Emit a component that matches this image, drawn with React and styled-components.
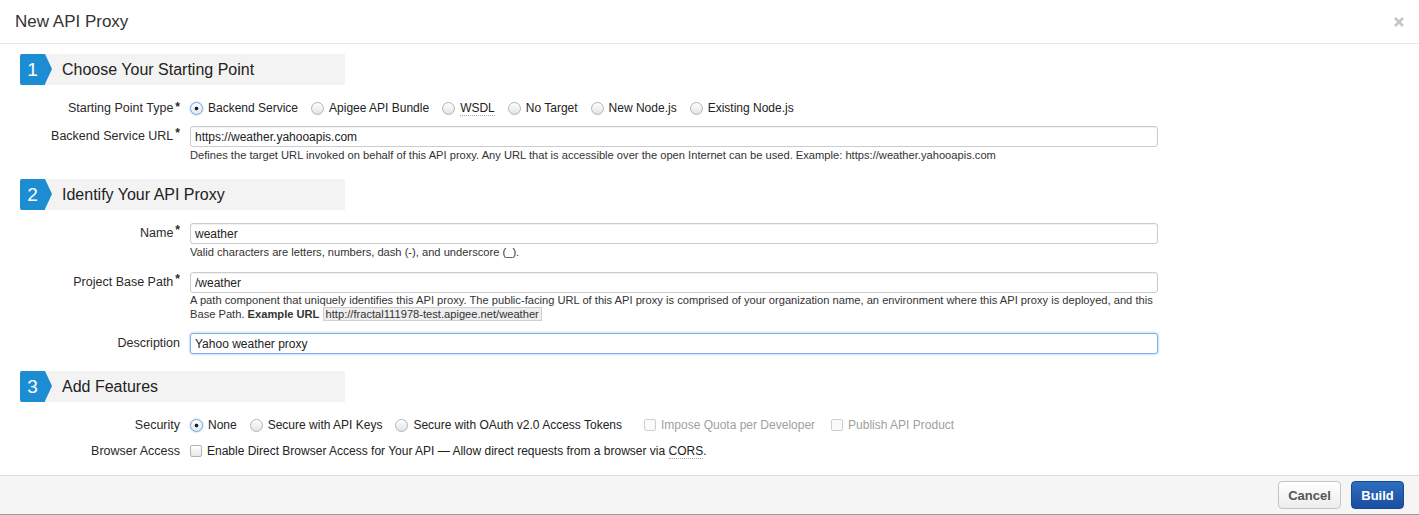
import React from "react";
import styled, { createGlobalStyle } from "styled-components";

const GlobalStyle = createGlobalStyle`
	html, body {
		margin: 0;
		padding: 0;
		background: #fff;
		font-family: "Liberation Sans", Arial, sans-serif;
		color: #333;
	}
`;

const Modal = styled.div`
	display: flex;
	flex-direction: column;
	min-height: 100vh;
	box-sizing: border-box;
`;

const Header = styled.div`
	display: flex;
	align-items: center;
	justify-content: space-between;
	height: 43px;
	padding: 0 15px;
	border-bottom: 1px solid #e8e8e8;
`;

const Title = styled.h2`
	margin: 0;
	font-size: 17px;
	font-weight: normal;
	color: #333;
	padding-top: 1px;
`;

const Close = styled.button`
	display: flex;
	border: 0;
	background: none;
	padding: 0;
	cursor: pointer;
`;

const Body = styled.div`
	flex: 1;
	padding: 0 20px;
`;

const SectionHead = styled.div`
	display: flex;
	align-items: center;
	width: 325px;
	height: 31px;
	margin-top: ${(p) => p.$mt}px;
	background: #f3f3f3;
`;

const Badge = styled.div`
	position: relative;
	display: flex;
	align-items: center;
	justify-content: center;
	width: 25px;
	height: 100%;
	background: #1c8dd3;
	border-radius: 2px 0 0 2px;
	color: #fff;
	font-size: 19px;
	&:after {
		position: absolute;
		right: -7px;
		top: 0;
		content: "";
		border-top: 15.5px solid transparent;
		border-bottom: 15.5px solid transparent;
		border-left: 7px solid #1c8dd3;
	}
`;

const HeadText = styled.h3`
	margin: 0 0 0 17px;
	font-size: 16px;
	font-weight: normal;
	color: #222;
`;

const Row = styled.div`
	display: grid;
	grid-template-columns: 160px 968px;
	column-gap: 10px;
	align-items: start;
	margin-top: ${(p) => p.$mt}px;
`;

const Label = styled.label`
	text-align: right;
	font-size: 12.5px;
	line-height: ${(p) => p.$lh || 21}px;
	color: #2a2a2a;
	white-space: nowrap;
`;

const Req = styled.span`
	display: inline-block;
	margin-left: 2px;
	font-weight: bold;
	font-size: 12px;
	vertical-align: top;
	line-height: 14px;
`;

const Input = styled.input`
	display: block;
	box-sizing: border-box;
	width: 100%;
	height: 21px;
	margin: 0;
	padding: 0 4px;
	font-family: "Liberation Sans", Arial, sans-serif;
	font-size: 12px;
	color: #222;
	border: 1px solid ${(p) => (p.$focused ? "#7fb0e3" : "#cccccc")};
	border-radius: 3px;
	box-shadow: ${(p) =>
		p.$focused ? "0 0 3px rgba(82, 154, 230, 0.6)" : "inset 0 1px 1px rgba(0,0,0,0.06)"};
	outline: none;
`;

const Help = styled.p`
	margin: ${(p) => p.$mt || 0}px 0 0;
	font-size: 11.15px;
	line-height: 14px;
	color: #333;
`;

const Code = styled.span`
	padding: 0 2px;
	background: #eeeeee;
	border: 1px solid #d0d0d0;
`;

const Options = styled.div`
	display: flex;
	align-items: center;
	height: 16px;
	gap: 13px;
	font-size: 12px;
`;

const Option = styled.label`
	display: flex;
	align-items: center;
	gap: 5px;
	margin-left: ${(p) => p.$ml || 0}px;
	color: ${(p) => (p.$disabled ? "#a0a0a0" : "#222")};
	white-space: nowrap;
`;

const Radio = styled.span`
	box-sizing: border-box;
	width: 13px;
	height: 13px;
	border-radius: 50%;
	border: 1px solid ${(p) => (p.$checked ? "#7ea6d6" : "#b3b3b3")};
	background: ${(p) =>
		p.$checked
			? "radial-gradient(circle, #222 0, #222 1.6px, transparent 2.2px), linear-gradient(#fdfdfd, #e2e9f3)"
			: "linear-gradient(#ffffff, #e3e3e3)"};
	box-shadow: ${(p) => (p.$checked ? "0 0 2px rgba(60,140,220,0.6)" : "none")};
`;

const Check = styled.span`
	box-sizing: border-box;
	width: 12px;
	height: 12px;
	border-radius: 2px;
	border: 1px solid ${(p) => (p.$disabled ? "#cfcfcf" : "#b3b3b3")};
	background: ${(p) =>
		p.$disabled ? "#fafafa" : "linear-gradient(#ffffff, #e8e8e8)"};
`;

const Abbr = styled.span`
	border-bottom: 1px dotted #aaa;
`;

const Footer = styled.div`
	display: flex;
	justify-content: flex-end;
	gap: 10px;
	padding: 5px 15px;
	background: #f5f5f5;
	border-top: 1px solid #dddddd;
	border-bottom: 1px solid #9a9a9a;
`;

const Button = styled.button`
	height: 28px;
	padding: 0 9px;
	font-family: "Liberation Sans", Arial, sans-serif;
	font-size: 13px;
	font-weight: bold;
	border-radius: 4px;
	cursor: pointer;
	color: ${(p) => (p.$primary ? "#fff" : "#555")};
	border: 1px solid ${(p) => (p.$primary ? "#1b4a94" : "#c5c5c5")};
	background: ${(p) =>
		p.$primary
			? "linear-gradient(#2d6fc1, #1a4d9e)"
			: "linear-gradient(#ffffff, #ececec)"};
	min-width: ${(p) => (p.$primary ? 53 : 63)}px;
`;

const CloseIcon = () => (
	<svg width="10" height="10" viewBox="0 0 10 10">
		<path d="M1 1 L9 9 M9 1 L1 9" stroke="#c6c6c6" strokeWidth="2.6" />
	</svg>
);

const Section = ({ num, title, mt }) => (
	<SectionHead $mt={mt}>
		<Badge>{num}</Badge>
		<HeadText>{title}</HeadText>
	</SectionHead>
);

const App = () => {
	return (
		<Modal>
			<GlobalStyle />
			<Header>
				<Title>New API Proxy</Title>
				<Close>
					<CloseIcon />
				</Close>
			</Header>
			<Body>
				<Section num="1" title="Choose Your Starting Point" mt={10} />
				<Row $mt={15}>
					<Label $lh={16}>
						Starting Point Type<Req>*</Req>
					</Label>
					<Options>
						<Option>
							<Radio $checked />
							Backend Service
						</Option>
						<Option>
							<Radio />
							Apigee API Bundle
						</Option>
						<Option>
							<Radio />
							<Abbr>WSDL</Abbr>
						</Option>
						<Option>
							<Radio />
							No Target
						</Option>
						<Option>
							<Radio />
							New Node.js
						</Option>
						<Option>
							<Radio />
							Existing Node.js
						</Option>
					</Options>
				</Row>
				<Row $mt={10}>
					<Label>
						Backend Service URL<Req>*</Req>
					</Label>
					<div>
						<Input defaultValue="https://weather.yahooapis.com" />
						<Help $mt={1}>
							Defines the target URL invoked on behalf of this API proxy. Any URL that is
							accessible over the open Internet can be used. Example:
							https://weather.yahooapis.com
						</Help>
					</div>
				</Row>

				<Section num="2" title="Identify Your API Proxy" mt={17} />
				<Row $mt={13}>
					<Label>
						Name<Req>*</Req>
					</Label>
					<div>
						<Input defaultValue="weather" />
						<Help $mt={1}>
							Valid characters are letters, numbers, dash (-), and underscore (_).
						</Help>
					</div>
				</Row>
				<Row $mt={13}>
					<Label>
						Project Base Path<Req>*</Req>
					</Label>
					<div>
						<Input defaultValue="/weather" />
						<Help>
							A path component that uniquely identifies this API proxy. The public-facing URL
							of this API proxy is comprised of your organization name, an environment where
							this API proxy is deployed, and this Base Path. <b>Example URL</b>{" "}
							<Code>http://fractal111978-test.apigee.net/weather</Code>
						</Help>
					</div>
				</Row>
				<Row $mt={12}>
					<Label>Description</Label>
					<Input $focused defaultValue="Yahoo weather proxy" />
				</Row>

				<Section num="3" title="Add Features" mt={17} />
				<Row $mt={15}>
					<Label $lh={16}>Security</Label>
					<Options>
						<Option>
							<Radio $checked />
							None
						</Option>
						<Option>
							<Radio />
							Secure with API Keys
						</Option>
						<Option>
							<Radio />
							Secure with OAuth v2.0 Access Tokens
						</Option>
						<Option $disabled $ml={9}>
							<Check $disabled />
							Impose Quota per Developer
						</Option>
						<Option $disabled $ml={3}>
							<Check $disabled />
							Publish API Product
						</Option>
					</Options>
				</Row>
				<Row $mt={10}>
					<Label $lh={16}>Browser Access</Label>
					<Options>
						<Option>
							<Check />
							<span>
								Enable Direct Browser Access for Your API — Allow direct requests from a
								browser via <Abbr>CORS</Abbr>.
							</span>
						</Option>
					</Options>
				</Row>
			</Body>
			<Footer>
				<Button>Cancel</Button>
				<Button $primary>Build</Button>
			</Footer>
		</Modal>
	);
};

export default App;
